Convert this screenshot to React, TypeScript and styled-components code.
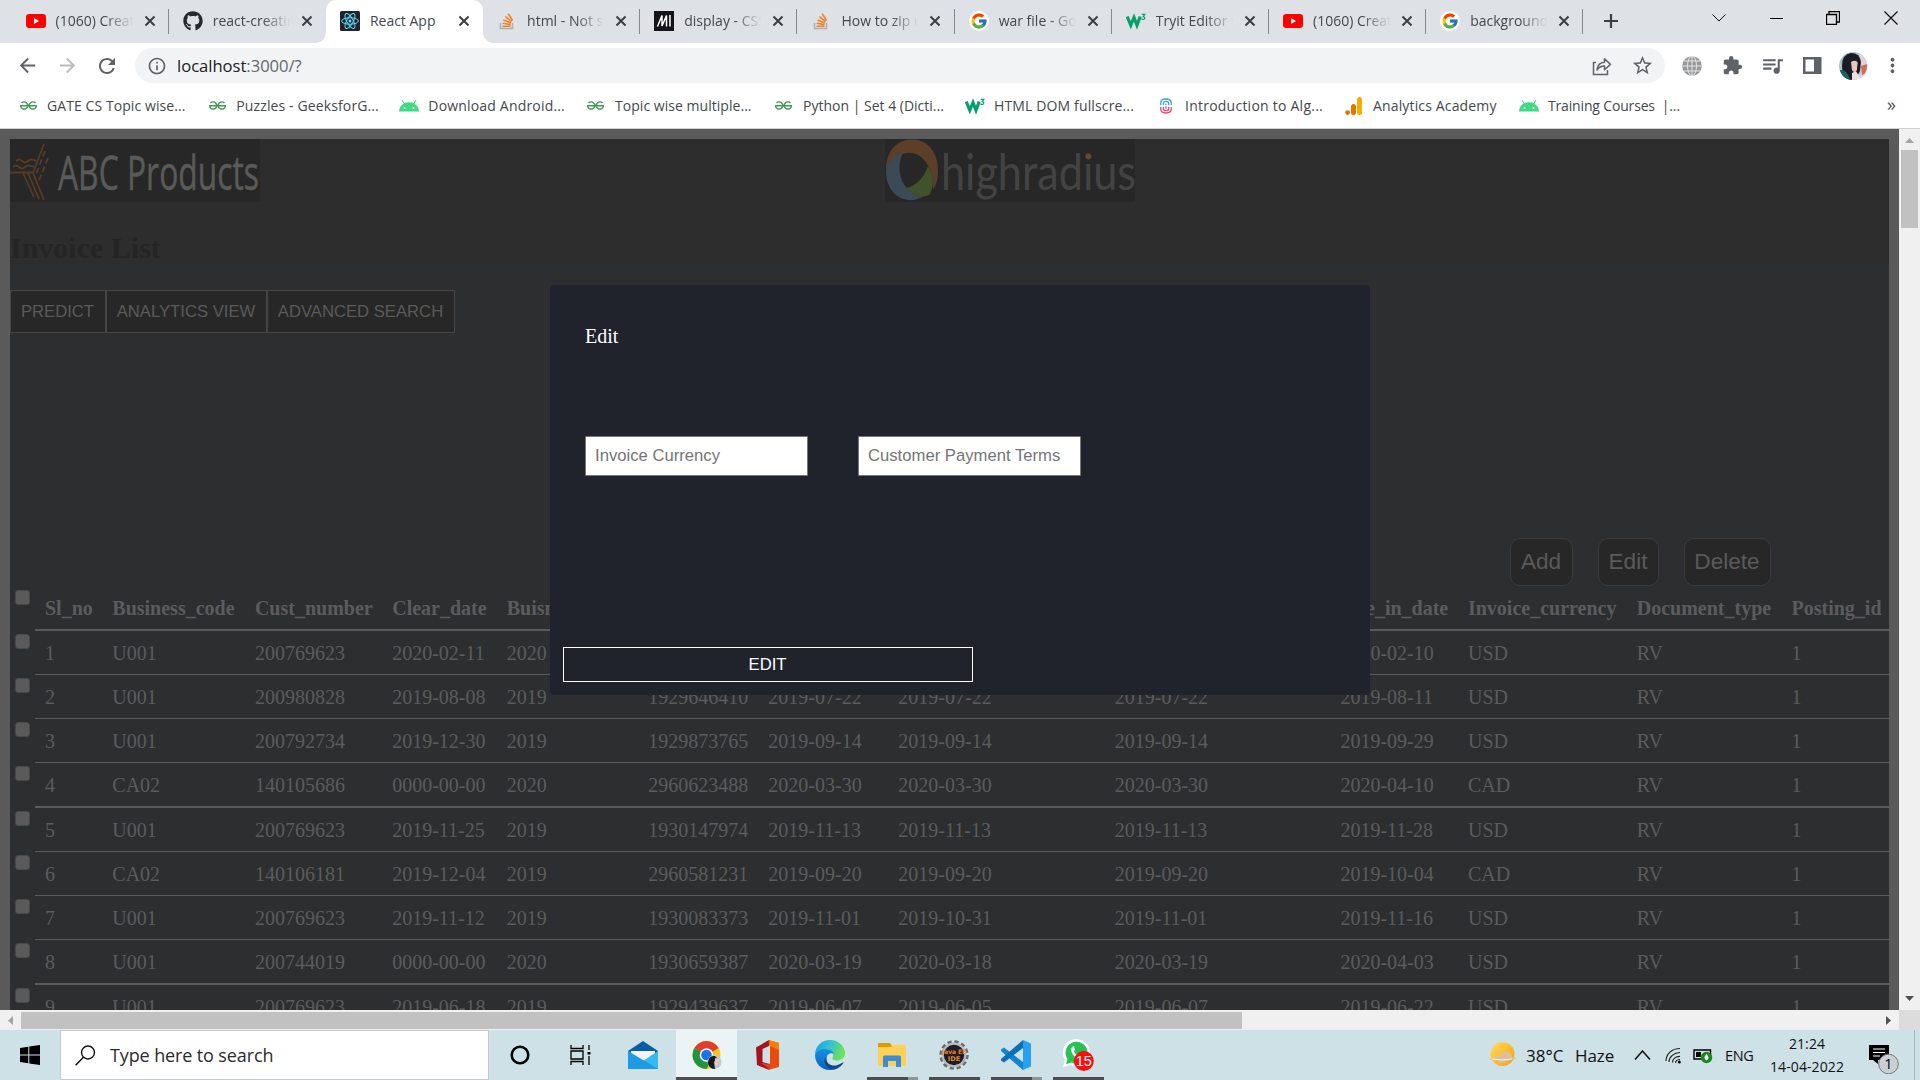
import React from "react";
import styled, { createGlobalStyle } from "styled-components";
import { FaGithub } from "react-icons/fa";
import { FcGoogle } from "react-icons/fc";
import { SiGeeksforgeeks } from "react-icons/si";
import {
  MdArrowBack, MdArrowForward, MdRefresh, MdInfoOutline, MdStarBorder,
  MdExtension, MdQueueMusic, MdMoreVert,
} from "react-icons/md";

const Global = createGlobalStyle`
  * { box-sizing: border-box; }
  body { margin: 0; overflow: hidden; }
`;

const ui = `"Open Sans", "Noto Sans", sans-serif`;
const sans = `"Liberation Sans", Arial, sans-serif`;
const serif = `"Liberation Serif", "Times New Roman", serif`;

const Screen = styled.div`
  display: flex;
  flex-direction: column;
  width: 1920px;
  height: 1080px;
  overflow: hidden;
  background: #fff;
  font-family: ${ui};
`;

/* ---------- tab strip ---------- */
const TabStrip = styled.div`
  display: flex;
  height: 43px;
  padding-left: 11.5px;
  background: #dee1e6;
`;
const Tab = styled.div<{ $active?: boolean; $bar?: boolean }>`
  position: relative;
  display: flex;
  align-items: center;
  width: 157.2px;
  height: 43px;
  padding: 0 0 1px 14px;
  flex: none;
  border-radius: 10px 10px 0 0;
  background: ${(p) => (p.$active ? "#fff" : "transparent")};
  &::after {
    content: "";
    display: ${(p) => (p.$bar ? "block" : "none")};
    position: absolute;
    right: 0;
    top: 9px;
    width: 1px;
    height: 25px;
    background: #85888c;
  }
`;
const TabFoot = styled.i<{ $left?: boolean }>`
  position: absolute;
  bottom: 0;
  ${(p) => (p.$left ? "left: -10px;" : "right: -10px;")}
  width: 10px;
  height: 10px;
  background: radial-gradient(circle at ${(p) => (p.$left ? "0 0" : "100% 0")}, transparent 9.5px, #fff 10px);
`;
const TabIcon = styled.span`
  display: flex;
  justify-content: center;
  width: 20px;
  margin-right: 10px;
  flex: none;
`;
const TabTitle = styled.span<{ $fade?: boolean }>`
  width: 79px;
  overflow: hidden;
  white-space: nowrap;
  font-size: 14px;
  line-height: 20px;
  color: #45484c;
  ${(p) => (p.$fade ? "-webkit-mask-image: linear-gradient(90deg, #000 62%, transparent 98%);" : "")}
`;
const TabClose = styled.svg`
  margin-left: 9px;
  width: 12px;
  height: 12px;
  flex: none;
`;
const NewTab = styled.svg`
  width: 16px;
  height: 16px;
  margin: 13px 0 0 20px;
`;
const WindowKeys = styled.div`
  display: flex;
  margin-left: auto;
  padding-right: 0.5px;
  height: 36px;
`;
const WindowKey = styled.span`
  display: flex;
  align-items: center;
  justify-content: center;
  width: 57.4px;
`;

/* ---------- toolbar ---------- */
const Toolbar = styled.div`
  display: flex;
  align-items: center;
  height: 45px;
  padding: 0 8px 0 7px;
  color: #5f6368;
`;
const Tool = styled.span<{ $dim?: boolean; $w?: number }>`
  display: flex;
  align-items: center;
  justify-content: center;
  width: ${(p) => p.$w ?? 40}px;
  height: 35px;
  flex: none;
  color: ${(p) => (p.$dim ? "#babcbe" : "#5f6368")};
`;
const Omnibox = styled.div`
  display: flex;
  align-items: center;
  width: 1530px;
  height: 35px;
  flex: none;
  margin: 0 7px 0 8px;
  padding: 0 3px 0 12px;
  border-radius: 18px;
  background: #f1f3f4;
`;
const Url = styled.span`
  flex: 1;
  margin-left: 10px;
  font-size: 16.6px;
  line-height: 24px;
  letter-spacing: -0.02px;
  color: #64686c;
  b { font-weight: 400; color: #202124; }
`;
const Avatar = styled.svg`
  width: 28px;
  height: 28px;
`;

/* ---------- bookmarks ---------- */
const Bookmarks = styled.div`
  display: flex;
  height: 41px;
  padding: 0 20px 5px 18px;
  border-bottom: 1px solid #cfd0d2;
  align-items: center;
`;
const Bookmark = styled.div<{ $w: number }>`
  display: flex;
  align-items: center;
  width: ${(p) => p.$w}px;
  flex: none;
`;
const MarkIcon = styled.span`
  display: flex;
  justify-content: center;
  width: 20px;
  margin-right: 9px;
  flex: none;
`;
const MarkText = styled.span<{ $track?: number }>`
  white-space: pre;
  font-size: 14px;
  line-height: 20px;
  letter-spacing: ${(p) => p.$track ?? 0}px;
  color: #45484c;
`;
const More = styled.span`
  margin: -4px 4px 0 auto;
  font-size: 18px;
  line-height: 20px;
  color: #505357;
`;

/* ---------- web page ---------- */
const Viewport = styled.div`
  display: grid;
  grid-template-columns: 1899px 21px;
  grid-template-rows: 881px 20px;
  height: 901px;
`;
const Page = styled.div`
  position: relative;
  overflow: hidden;
  padding: 10px 10px 0;
  background: #5a5a5a;
  font-family: ${serif};
  font-size: 20px;
`;
const Head = styled.header`
  height: 126px;
  background: #2d2d2d;
`;
const Logos = styled.div`
  display: flex;
  gap: 625px;
  height: 63px;
`;
const LogoBox = styled.svg`
  width: 250px;
  height: 63px;
  background: #272727;
`;
const Title = styled.h2`
  margin: 29px 0 0;
  font-size: 30px;
  line-height: 34px;
  color: #252525;
`;
const Body = styled.main`
  height: 760px;
  padding-top: 25px;
  background: #2d2e30;
`;
const ButtonRow = styled.div`
  display: flex;
`;
const Button = styled.button<{ $w: number }>`
  width: ${(p) => p.$w}px;
  height: 43px;
  padding: 1px 1px 0 0;
  border: 1px solid #464646;
  background: #272727;
  color: #5a5a5a;
  font: 16.67px ${sans};
  white-space: nowrap;
`;
const Actions = styled.div`
  display: flex;
  justify-content: flex-end;
  gap: 25px;
  margin-top: 205px;
  padding-right: 118px;
`;
const Action = styled(Button)`
  height: 48px;
  padding: 0 1px 1px 0;
  border-color: #3b3b3b;
  border-radius: 10px;
  font-size: 22.6px;
`;
const Table = styled.div`
  margin-top: 1px;
  color: #5b5c5d;
`;
const Line = styled.div<{ $h: number }>`
  display: flex;
  height: ${(p) => p.$h}px;
`;
const Check = styled.span`
  width: 15px;
  height: 15px;
  margin: 3px 5px 0;
  flex: none;
  border: 1px solid #484848;
  border-radius: 3px;
  background: #5a5a5a;
`;
const Cells = styled.div<{ $rule: number; $head?: boolean }>`
  display: grid;
  grid-template-columns: 67.3px 142.6px 137.3px 114.6px 141.4px 120.2px 130px 216.4px 225.7px 127.5px 168.8px 154.8px 1fr;
  flex: 1;
  padding-left: 10px;
  border-bottom: ${(p) => p.$rule}px solid ${(p) => (p.$rule > 1 ? "#5a5a5b" : "#595a5b")};
  font-weight: ${(p) => (p.$head ? 700 : 400)};
  line-height: 23px;
  padding-top: ${(p) => (p.$head ? 10 : 11)}px;
`;
const Cell = styled.span`
  white-space: nowrap;
`;

const Modal = styled.section`
  position: absolute;
  left: 550px;
  top: 156px;
  width: 820px;
  height: 410px;
  padding: 39px 13px 13px;
  display: flex;
  flex-direction: column;
  border-radius: 4px;
  background: #20232b;
  color: #fff;
`;
const ModalTitle = styled.div`
  margin-left: 22px;
  line-height: 24px;
`;
const Fields = styled.div`
  display: flex;
  gap: 50px;
  margin: 88px 0 0 22px;
`;
const Field = styled.input`
  width: 223px;
  height: 40px;
  padding: 0 9px;
  border: 1px solid #767676;
  border-radius: 1px;
  background: #fff;
  font: 16.67px ${sans};
  &::placeholder { color: #757575; opacity: 1; }
`;
const Submit = styled.button`
  width: 410px;
  height: 35px;
  margin-top: auto;
  padding: 1px 1px 0 0;
  border: 1px solid #fff;
  background: transparent;
  color: #fff;
  font: 16.67px ${sans};
`;

const VBar = styled.div`
  display: flex;
  flex-direction: column;
  align-items: center;
  justify-content: space-between;
  background: #f0f0f0;
`;
const VThumb = styled.div`
  width: 17px;
  height: 78px;
  margin: 0 0 auto;
  background: #c1c1c1;
`;
const HBar = styled.div`
  display: flex;
  align-items: center;
  background: #f0f0f0;
`;
const HThumb = styled.div`
  width: 1221px;
  height: 17px;
  margin: 1px auto 0 0;
  background: #c1c1c1;
`;
const Arrow = styled.svg`
  width: 21px;
  height: 21px;
  flex: none;
`;
const Corner = styled.div`
  background: #dcdcdc;
`;

/* ---------- taskbar ---------- */
const Taskbar = styled.footer`
  display: flex;
  height: 50px;
  background: #cde1e7;
  color: #111;
`;
const Start = styled.div`
  display: flex;
  align-items: center;
  width: 60px;
  padding-left: 20px;
`;
const Search = styled.div`
  display: flex;
  align-items: center;
  width: 429px;
  padding: 0 0 0 14px;
  border: 1px solid #c3cacd;
  background: #fff;
  font-size: 18px;
  color: #2b2b2b;
`;
const SearchText = styled.span`
  margin-left: 14px;
  letter-spacing: -0.12px;
`;
const AppButton = styled.div<{ $w?: number; $on?: boolean }>`
  position: relative;
  display: flex;
  align-items: center;
  justify-content: center;
  width: ${(p) => p.$w ?? 62}px;
  background: ${(p) => (p.$on ? "#eaf3f6" : "transparent")};
`;
const Underline = styled.i<{ $w: number; $multi?: boolean }>`
  position: absolute;
  bottom: 0;
  left: calc(50% - ${(p) => p.$w / 2}px);
  width: ${(p) => p.$w}px;
  height: 3px;
  background: ${(p) => (p.$multi ? "linear-gradient(90deg, #4b4d4e 41px, #8f9496 41px)" : "#4b4d4e")};
`;
const Tray = styled.div`
  display: flex;
  align-items: center;
  margin-left: auto;
  width: 432px;
  flex: none;
`;
const TrayText = styled.span<{ $w: number; $size: number; $track?: number }>`
  width: ${(p) => p.$w}px;
  font-size: ${(p) => p.$size}px;
  letter-spacing: ${(p) => p.$track ?? 0}px;
  white-space: nowrap;
`;
const TraySlot = styled.span<{ $w: number }>`
  display: flex;
  align-items: center;
  width: ${(p) => p.$w}px;
`;
const Clock = styled.div`
  width: 84px;
  margin-right: 20px;
  text-align: center;
  font-size: 14px;
  line-height: 23px;
  padding-bottom: 1px;
  letter-spacing: 0.1px;
`;
const Peek = styled.i`
  width: 1px;
  height: 50px;
  margin-left: auto;
  margin-right: 5px;
  background: #a3b6bc;
`;

/* ---------- drawings ---------- */
const YouTube = () => (
  <svg width="20" height="20" viewBox="0 0 20 20">
    <rect y="3" width="20" height="14" rx="3.2" fill="#f00" />
    <path d="M8 7v6l5-3z" fill="#fff" />
  </svg>
);
const ReactLogo = () => (
  <svg width="20" height="20" viewBox="0 0 20 20">
    <rect width="20" height="20" rx="1.5" fill="#20232a" />
    <g fill="none" stroke="#61dafb" strokeWidth="1">
      <ellipse cx="10" cy="10" rx="8.4" ry="3.2" />
      <ellipse cx="10" cy="10" rx="8.4" ry="3.2" transform="rotate(60 10 10)" />
      <ellipse cx="10" cy="10" rx="8.4" ry="3.2" transform="rotate(120 10 10)" />
    </g>
    <circle cx="10" cy="10" r="1.5" fill="#61dafb" />
  </svg>
);
const Stack = () => (
  <svg width="20" height="20" viewBox="0 0 20 20">
    <path d="M3.5 12v5.5h12V12" fill="none" stroke="#aab0b5" strokeWidth="1.5" />
    <g stroke="#f48024" strokeWidth="1.6">
      <path d="M5.5 15.2h8M5.6 12.3l7.9 1.3M6.4 9l7.5 3M8.4 5.6l6.3 5M11.2 2.8l4.4 6.7" />
    </g>
  </svg>
);
const Mdn = () => (
  <svg width="20" height="20" viewBox="0 0 20 20">
    <rect width="20" height="20" fill="#15141a" />
    <path d="M3.500 15.500L8 4.500V15L12.500 4.500V15.500M16 4v11.500" fill="none" stroke="#fff" strokeWidth="1.500" />
  </svg>
);
const GoogleDisc = styled.span`
  display: flex;
  align-items: center;
  justify-content: center;
  width: 20px;
  height: 20px;
  border-radius: 50%;
  background: #fff;
`;
const Google = () => <GoogleDisc><FcGoogle size={18} /></GoogleDisc>;
const W3 = () => (
  <svg width="20" height="20" viewBox="0 0 20 20">
    <path d="M1.2 5.5L4.8 14.3L8 6.5L11 14.3L14.2 5.5" fill="none" stroke="#04a16d" strokeWidth="3.2" />
    <path d="M15.8 3.4h3L17.2 5.6c2.2 0 2 2.9 0 2.9-.8 0-1.3-.4-1.6-.9" fill="none" stroke="#04a16d" strokeWidth="1.2" />
  </svg>
);
const Gfg = () => <SiGeeksforgeeks size={17} color="#459a5b" />;
const Android = () => (
  <svg width="20" height="20" viewBox="0 0 20 20">
    <path d="M0 15.5C.4 9.6 4.6 6.2 10 6.2s9.600 3.400 10 9.300z" fill="#3ddc84" />
    <path d="M3 4l2.500 4.200M17 4l-2.500 4.200" stroke="#3ddc84" strokeWidth="1" />
    <circle cx="5.500" cy="12" r=".9" fill="#fff" /><circle cx="14.500" cy="12" r=".9" fill="#fff" />
  </svg>
);
const Algo = () => (
  <svg width="14" height="18" viewBox="0 0 16 20" fill="none" strokeWidth="1.500">
    <path d="M2 9V6.500Q2 2 8 2t6 4.500V9M5 9V7Q5 4.800 8 4.800T11 7v2M8 7v2.500" stroke="#3d9fd3" />
    <path d="M2 11v2.500Q2 18 8 18t6-4.500V11M5 11v2Q5 15.200 8 15.200T11 13v-2M8 10v3" stroke="#e8467c" />
    <path d="M0 10h16" stroke="#fff" strokeWidth=".8" />
  </svg>
);
const Analytics = () => (
  <svg width="18" height="20" viewBox="0 0 18 20">
    <rect x="12" y="1" width="5" height="18" rx="2.500" fill="#f9ab00" />
    <rect x="6" y="8" width="5" height="11" rx="2.500" fill="#e37400" />
    <circle cx="2.600" cy="16.600" r="2.400" fill="#e37400" />
  </svg>
);
const Share = () => (
  <svg width="20" height="20" viewBox="0 0 20 20" fill="none" stroke="#5f6368" strokeWidth="1.500">
    <path d="M4 6.500H1.500v12h14V14" />
    <path d="M5 14C5.500 9 8.500 6.500 12.500 6.300V2.800l6 5.600-6 5.300V10C9.500 10 7 11 5 14z" strokeLinejoin="round" />
  </svg>
);
const Globe = () => (
  <svg width="20" height="20" viewBox="0 0 20 20">
    <circle cx="10" cy="10" r="9.800" fill="#96989a" />
    <g fill="none" stroke="#e3e4e5" strokeWidth="1">
      <ellipse cx="10" cy="10" rx="4.500" ry="9.800" />
      <path d="M10 0v20M0 10h20M1.500 5h17M1.500 15h17" />
    </g>
  </svg>
);
const SidePanel = () => (
  <svg width="19" height="19" viewBox="0 0 19 19">
    <path d="M0 1h18.500v17H0z M2.500 3.500v12H11v-12z" fill="#5f6368" fillRule="evenodd" />
  </svg>
);
const Portrait = () => (
  <Avatar viewBox="0 0 28 28">
    <clipPath id="face"><circle cx="14" cy="14" r="14" /></clipPath>
    <g clipPath="url(#face)">
      <rect width="28" height="28" fill="#a9c6cb" />
      <path d="M20 0h8v28h-8z" fill="#e3cfd8" />
      <path d="M22 14l6-2v9l-5 2z" fill="#cc6d58" />
      <path d="M3 14Q3 2 12 1q9 0 10 9l-1 9-6 9H4z" fill="#1b1d24" />
      <path d="M1 18q7-1 10 10H1z" fill="#1f6063" />
      <path d="M12 10q5-3 7 1l-1 7q-3 4-5 0z" fill="#e6c8bd" />
      <path d="M13 21l4-2 5 9h-9z" fill="#e8e4e2" />
      <path d="M19 8q3 5 1 14l-2-3z" fill="#1b1d24" />
    </g>
  </Avatar>
);

const AbcLogo = () => (
  <LogoBox viewBox="0 0 250 63">
    <g fill="none" stroke="#563b26" strokeWidth="1.800">
      <path d="M0 33.500h23L34 5M13 34l11 24M18 34l11 26M23 34l11 27" />
      <path d="M6 22q3-3 6 0t6 0 8 0M3 28q3-3 6 0t6 0 9 0" />
      <path d="M35 12L25 38M38 19L28 44" strokeDasharray="6 3" />
    </g>
    <text x="48" y="51" fontFamily="Open Sans" fontSize="47" fill="#5a5a5a" stroke="#5a5a5a" strokeWidth=".5" textLength="201" lengthAdjust="spacingAndGlyphs">ABC Products</text>
  </LogoBox>
);
const HighRadius = () => (
  <LogoBox viewBox="0 0 250 63">
    <path d="M1 31C1 13 11 .5 27 .5s26 13 26 31c0 9-2 15-5 19 0-9-1-17-5-24C37 15 25 10 14 17 6 21 3 25 1 31z" fill="#5c3f29" />
    <path d="M18 14C12 24 14 40 21 48q8 9 18 9C22 68 1 56 1 33 1 25 8 17 18 14z" fill="#3b4a57" />
    <path d="M43 27c6 10 6 20 2 28-4 4-14 4-24-6 9-1 18-10 22-22z" fill="#41522b" />
    <text x="56" y="51" fontFamily="Lato" fontSize="50" fill="#434343" textLength="195" lengthAdjust="spacingAndGlyphs">highradius</text>
    <circle cx="203.500" cy="17.500" r="2.800" fill="#6b452c" />
  </LogoBox>
);

const Mail = () => (
  <svg width="30" height="30" viewBox="0 0 30 30">
    <path d="M0 11L15 1l15 10v7H0z" fill="#0a5ba8" />
    <path d="M3 11h24v9H3z" fill="#f4f4f6" />
    <path d="M0 11l15 10 15-10v18H0z" fill="#35b9f1" />
    <path d="M0 11l30 18H0z" fill="#1e9be3" />
  </svg>
);
const Chrome = () => (
  <svg width="30" height="30" viewBox="0 0 30 30">
    <circle cx="14.500" cy="15" r="14" fill="#fcc31e" />
    <path d="M14.500 15L2.400 8A14 14 0 0 1 26.600 8z" fill="#e33b2e" />
    <path d="M14.500 15L2.400 8a14 14 0 0 0 12.100 21l5-9z" fill="#229342" />
    <circle cx="14.500" cy="15" r="6.800" fill="#fff" />
    <circle cx="14.500" cy="15" r="5.300" fill="#1a73e8" />
    <circle cx="22.500" cy="22" r="7" fill="#bfc9cc" />
    <path d="M16 24q0-9 7-8l2 2-3 4 1 7q-5 0-7-5z" fill="#17191e" />
    <path d="M23 18l4 1-1 6-3 1z" fill="#e3c8be" />
  </svg>
);
const Office = () => (
  <svg width="24" height="30" viewBox="0 0 24 30">
    <path d="M0 7.500L13 0v6L6.500 9v13L13 24v6L1 25z" fill="#a5131c" />
    <path d="M12 0l11 3v24l-11 3V24.500l2-1V6.500z" fill="#eb4a0b" />
    <path d="M13 0l10 3v7l-9-4z" fill="#f98005" />
    <path d="M5 23l9 1v6z" fill="#d33c2a" />
  </svg>
);
const Edge = () => (
  <svg width="30" height="30" viewBox="0 0 30 30">
    <defs>
      <linearGradient id="sea" x1="0" x2="1" y1="0" y2=".3"><stop offset="0" stopColor="#1b9ce6" /><stop offset=".55" stopColor="#33c5ce" /><stop offset="1" stopColor="#6be356" /></linearGradient>
      <linearGradient id="deep" x1="0" x2="0" y1="0" y2="1"><stop offset="0" stopColor="#1590df" /><stop offset="1" stopColor="#0a62c4" /></linearGradient>
    </defs>
    <path d="M0 15C0 6 7 0 15 0s15 6 15 13c0 5-4 7.500-8 7.500-3 0-5-1-4.500-2.500 2-3 .5-8-5.500-8.500C6 9 1 12 0 15z" fill="url(#sea)" />
    <path d="M0 15C1 11 6 8.500 11 9c4 .4 7 2 8 5-4-2-8 1-7.500 5.500.5 6 6 9.500 11 8.500-3 2-6 2-8 2C6 30 0 23 0 15z" fill="url(#deep)" />
    <path d="M11.500 17c-1.500 6 5 10 11 8 3-1 5-3 6-2.500.5 0-2 4.500-7.500 6.500C12 30.500 6 22 11.500 17z" fill="#114a8b" />
  </svg>
);
const Folder = () => (
  <svg width="28" height="26" viewBox="0 0 28 26">
    <path d="M0 2q0-1 1-1h11l2 3v6H0z" fill="#dc9a05" />
    <path d="M0 5h13l2-2h12q1 0 1 1v20H0z" fill="#fdd057" />
    <path d="M5 25V15q0-1.500 1.500-1.500h15Q23 13.500 23 15v10h-5v-6h-8v6z" fill="#3b8dd6" />
  </svg>
);
const JavaIde = () => (
  <svg width="30" height="30" viewBox="0 0 30 30">
    <circle cx="15" cy="15" r="12.700" fill="none" stroke="#6a6d70" strokeWidth="4" strokeDasharray="4 2.650" />
    <circle cx="15" cy="15" r="11.300" fill="#1d1d2b" stroke="#b9bbbd" strokeWidth="2.200" />
    <text x="15" y="14" textAnchor="middle" fontFamily="DejaVu Sans" fontSize="6.200" fontWeight="700" fill="#f08317" textLength="24" lengthAdjust="spacingAndGlyphs">Java EE</text>
    <text x="15" y="20.500" textAnchor="middle" fontFamily="DejaVu Sans" fontSize="6.500" fontWeight="700" fill="#f08317">IDE</text>
  </svg>
);
const VsCode = () => (
  <svg width="30" height="30" viewBox="0 0 30 30">
    <path d="M0 9.500L3 7.500 22 22v8L0 11z" fill="#1185d0" />
    <path d="M0 20.500L3 22.500 22 8V0L0 19z" fill="#0a6fb8" />
    <path d="M22 0l8 3.500v23L22 30z" fill="#26a1f0" />
  </svg>
);
const WhatsApp = () => (
  <svg width="32" height="32" viewBox="0 0 32 32">
    <path d="M1 28l2-7A13.500 13.500 0 1 1 9 26z" fill="#fff" />
    <path d="M4 25l1.500-5A11 11 0 1 1 9.500 23.500z" fill="#25c455" />
    <path d="M10 8c-3 4 3 13 9 12l1-4-4-1-1 1c-2-1-3-3-3-4l1-1-1-4z" fill="#fff" />
    <circle cx="21.800" cy="22" r="10" fill="#fd0d0d" />
    <text x="21.800" y="27" textAnchor="middle" fontFamily="Liberation Sans" fontSize="14.500" fill="#fff">15</text>
  </svg>
);
const Notifications = () => (
  <svg width="32" height="38" viewBox="0 0 32 38">
    <path d="M0 9h20v15H9v4l-5-4H0z" fill="#000" />
    <path d="M4 13h12M4 16.500h12M4 20h7" stroke="#fff" strokeWidth="1.100" />
    <circle cx="19.500" cy="28" r="9.800" fill="#c9cfd2" stroke="#777" />
    <text x="19.500" y="33.200" textAnchor="middle" fontFamily="Open Sans" fontSize="14.500" fill="#000">1</text>
  </svg>
);

/* ---------- data ---------- */
const tabs = [
  { icon: <YouTube />, title: "(1060) Creati", bar: true },
  { icon: <FaGithub size={20} color="#24292f" />, title: "react-creatin" },
  { icon: <ReactLogo />, title: "React App", active: true },
  { icon: <Stack />, title: "html - Not s", bar: true },
  { icon: <Mdn />, title: "display - CSS", bar: true },
  { icon: <Stack />, title: "How to zip u", bar: true },
  { icon: <Google />, title: "war file - Go", bar: true },
  { icon: <W3 />, title: "Tryit Editor v", bar: true },
  { icon: <YouTube />, title: "(1060) Creati", bar: true },
  { icon: <Google />, title: "background-", bar: true },
];

const marks = [
  { icon: <Gfg />, text: "GATE CS Topic wise...", w: 189.3, track: 0.08 },
  { icon: <Gfg />, text: "Puzzles - GeeksforG...", w: 192, track: 0.12 },
  { icon: <Android />, text: "Download Android...", w: 186.7, track: 0.18 },
  { icon: <Gfg />, text: "Topic wise multiple...", w: 188, track: 0.04 },
  { icon: <Gfg />, text: "Python | Set 4 (Dicti...", w: 191, track: 0 },
  { icon: <W3 />, text: "HTML DOM fullscre...", w: 191, track: 0.14 },
  { icon: <Algo />, text: "Introduction to Alg...", w: 188, track: 0.24 },
  { icon: <Analytics />, text: "Analytics Academy", w: 175, track: 0.15 },
  { icon: <Android />, text: "Training Courses  |...", w: 190, track: -0.16 },
];

const headings = ["Sl_no", "Business_code", "Cust_number", "Clear_date", "Buisness_year", "Doc_id", "Posting_date", "Document_create_date", "Document_create_date1", "Due_in_date", "Invoice_currency", "Document_type", "Posting_id"];
const rows = [
  ["1", "U001", "200769623", "2020-02-11", "2020", "1930438491", "2020-01-26", "2020-01-25", "2020-01-26", "2020-02-10", "USD", "RV", "1"],
  ["2", "U001", "200980828", "2019-08-08", "2019", "1929646410", "2019-07-22", "2019-07-22", "2019-07-22", "2019-08-11", "USD", "RV", "1"],
  ["3", "U001", "200792734", "2019-12-30", "2019", "1929873765", "2019-09-14", "2019-09-14", "2019-09-14", "2019-09-29", "USD", "RV", "1"],
  ["4", "CA02", "140105686", "0000-00-00", "2020", "2960623488", "2020-03-30", "2020-03-30", "2020-03-30", "2020-04-10", "CAD", "RV", "1"],
  ["5", "U001", "200769623", "2019-11-25", "2019", "1930147974", "2019-11-13", "2019-11-13", "2019-11-13", "2019-11-28", "USD", "RV", "1"],
  ["6", "CA02", "140106181", "2019-12-04", "2019", "2960581231", "2019-09-20", "2019-09-20", "2019-09-20", "2019-10-04", "CAD", "RV", "1"],
  ["7", "U001", "200769623", "2019-11-12", "2019", "1930083373", "2019-11-01", "2019-10-31", "2019-11-01", "2019-11-16", "USD", "RV", "1"],
  ["8", "U001", "200744019", "0000-00-00", "2020", "1930659387", "2020-03-19", "2020-03-18", "2020-03-19", "2020-04-03", "USD", "RV", "1"],
  ["9", "U001", "200769623", "2019-06-18", "2019", "1929439637", "2019-06-07", "2019-06-05", "2019-06-07", "2019-06-22", "USD", "RV", "1"],
];

export default function App() {
  return (
    <Screen>
      <Global />
      <TabStrip>
        {tabs.map((t, i) => (
          <Tab key={i} $active={t.active} $bar={t.bar}>
            {t.active && <><TabFoot $left /><TabFoot /></>}
            <TabIcon>{t.icon}</TabIcon>
            <TabTitle $fade={!t.active}>{t.title}</TabTitle>
            <TabClose viewBox="0 0 12 12"><path d="M1.500 1.500l9 9M10.500 1.500l-9 9" stroke="#3c4043" strokeWidth="2" /></TabClose>
          </Tab>
        ))}
        <NewTab viewBox="0 0 16 16"><path d="M8 1v14M1 8h14" stroke="#3c4043" strokeWidth="2.200" /></NewTab>
        <WindowKeys>
          <WindowKey><svg width="14" height="8" viewBox="0 0 14 8"><path d="M.5.5L7 7 13.500.5" fill="none" stroke="#111" /></svg></WindowKey>
          <WindowKey><svg width="13" height="2" viewBox="0 0 13 2"><path d="M0 1.500h13" stroke="#000" /></svg></WindowKey>
          <WindowKey><svg width="14" height="14" viewBox="0 0 14 14"><path d="M.5 3.500h10v10H.5zM3 3V.5h10.500V11H11" fill="none" stroke="#000" strokeWidth="1.300" /></svg></WindowKey>
          <WindowKey><svg width="14" height="14" viewBox="0 0 14 14"><path d="M.5.5l13 13M13.500.5l-13 13" stroke="#111" strokeWidth="1.200" /></svg></WindowKey>
        </WindowKeys>
      </TabStrip>

      <Toolbar>
        <Tool><MdArrowBack size={23} /></Tool>
        <Tool $dim><MdArrowForward size={23} /></Tool>
        <Tool><MdRefresh size={24} /></Tool>
        <Omnibox>
          <MdInfoOutline size={20} />
          <Url><b>localhost</b>:3000/?</Url>
          <Tool><Share /></Tool>
          <Tool><MdStarBorder size={23} /></Tool>
        </Omnibox>
        <Tool><Globe /></Tool>
        <Tool><MdExtension size={21} /></Tool>
        <Tool><MdQueueMusic size={25} /></Tool>
        <Tool><SidePanel /></Tool>
        <Tool $w={42}><Portrait /></Tool>
        <Tool $w={36}><MdMoreVert size={23} /></Tool>
      </Toolbar>

      <Bookmarks>
        {marks.map((m, i) => (
          <Bookmark key={i} $w={m.w}>
            <MarkIcon>{m.icon}</MarkIcon>
            <MarkText $track={m.track}>{m.text}</MarkText>
          </Bookmark>
        ))}
        <More>»</More>
      </Bookmarks>

      <Viewport>
        <Page>
          <Head>
            <Logos><AbcLogo /><HighRadius /></Logos>
            <Title>Invoice List</Title>
          </Head>
          <Body>
            <ButtonRow>
              <Button $w={96}>PREDICT</Button>
              <Button $w={161}>ANALYTICS VIEW</Button>
              <Button $w={188}>ADVANCED SEARCH</Button>
            </ButtonRow>
            <Actions>
              <Action $w={63}>Add</Action>
              <Action $w={61}>Edit</Action>
              <Action $w={87}>Delete</Action>
            </Actions>
            <Table>
              <Line $h={44}>
                <Check />
                <Cells $rule={2} $head>{headings.map((h) => <Cell key={h}>{h}</Cell>)}</Cells>
              </Line>
              {rows.map((r, i) => (
                <Line key={i} $h={i % 4 === 3 ? 45 : 44}>
                  <Check />
                  <Cells $rule={i % 4 === 3 ? 2 : 1}>{r.map((c, j) => <Cell key={j}>{c}</Cell>)}</Cells>
                </Line>
              ))}
            </Table>
          </Body>
          <Modal>
            <ModalTitle>Edit</ModalTitle>
            <Fields>
              <Field placeholder="Invoice Currency" />
              <Field placeholder="Customer Payment Terms" />
            </Fields>
            <Submit>EDIT</Submit>
          </Modal>
        </Page>
        <VBar>
          <Arrow viewBox="0 0 21 21"><path d="M6 14l4.500-5 4.500 5z" fill="#a3a3a3" /></Arrow>
          <VThumb />
          <Arrow viewBox="0 0 21 21"><path d="M6 7l4.500 5L15 7z" fill="#505050" /></Arrow>
        </VBar>
        <HBar>
          <Arrow viewBox="0 0 21 21"><path d="M13 6l-5 4.500 5 4.500z" fill="#a3a3a3" /></Arrow>
          <HThumb />
          <Arrow viewBox="0 0 21 21"><path d="M8 6l5 4.500L8 15z" fill="#505050" /></Arrow>
        </HBar>
        <Corner />
      </Viewport>

      <Taskbar>
        <Start>
          <svg width="20" height="20" viewBox="0 0 20 20"><path d="M0 3l8.300-1.200v7.700H0zM9.300 1.600L20 0v9.500H9.300zM0 10.500h8.300v7.700L0 17zM9.300 10.500H20V20L9.300 18.400z" fill="#000" /></svg>
        </Start>
        <Search>
          <svg width="21" height="21" viewBox="0 0 21 21"><circle cx="13" cy="7.500" r="6.500" fill="none" stroke="#111" strokeWidth="1.400" /><path d="M8.400 12.300L.6 20.300" stroke="#111" strokeWidth="1.500" /></svg>
          <SearchText>Type here to search</SearchText>
        </Search>
        <AppButton><svg width="22" height="22" viewBox="0 0 22 22"><circle cx="11" cy="11" r="8.300" fill="none" stroke="#000" strokeWidth="2.600" /></svg></AppButton>
        <AppButton $w={59}>
          <svg width="21" height="20" viewBox="0 0 21 20" fill="none" stroke="#000" strokeWidth="1.300"><path d="M1 0v3.500h12V0M1 20v-3.500h12V20M1 6h12v8H1zM19 0v5M19 11v9" /><path d="M17.500 7h3v2.500h-3z" fill="#000" stroke="none" /></svg>
        </AppButton>
        <AppButton $w={66}><Mail /></AppButton>
        <AppButton $w={61} $on><Chrome /><Underline $w={61} /></AppButton>
        <AppButton><Office /></AppButton>
        <AppButton><Edge /></AppButton>
        <AppButton><Folder /><Underline $w={51} $multi /></AppButton>
        <AppButton><JavaIde /><Underline $w={51} /></AppButton>
        <AppButton><VsCode /><Underline $w={51} $multi /></AppButton>
        <AppButton><WhatsApp /><Underline $w={51} /></AppButton>
        <Tray>
          <TraySlot $w={38}>
            <svg width="29" height="26" viewBox="0 0 29 26">
              <defs><linearGradient id="sun" x1="0" x2="1" y1="0" y2="1"><stop offset="0" stopColor="#ffdf5e" /><stop offset="1" stopColor="#fb9b0c" /></linearGradient></defs>
              <circle cx="14.500" cy="12" r="12" fill="url(#sun)" />
              <path d="M0 18q5-2 8-2 1-4 5-3 2-4 7-3 4 1 4 5l5 1q-3 2-7 2-3 3-9 3-3 0-4-3z" fill="#d8c0a5" opacity=".95" />
              <path d="M4 17q9 2 20 0" stroke="#fff3e0" fill="none" />
            </svg>
          </TraySlot>
          <TrayText $w={49} $size={17} $track={0}>38°C</TrayText>
          <TrayText $w={59} $size={17} $track={-0.1}>Haze</TrayText>
          <TraySlot $w={31}><svg width="17" height="11" viewBox="0 0 17 11"><path d="M1 9.500L8.500 1 16 9.500" fill="none" stroke="#111" strokeWidth="1.500" /></svg></TraySlot>
          <TraySlot $w={28}>
            <svg width="17" height="17" viewBox="0 0 17 17" fill="none" stroke="#222" strokeWidth="1.200"><path d="M1 14C1 7 7 1.500 15 1.500M4 15C4 10 9 5.500 15 5.500M7.500 15.500c0-3.500 3-6 7.500-6.200M10.500 16c0-2 2-3.500 4.500-3.500" /><circle cx="14.300" cy="15" r="1.500" fill="#000" stroke="none" /></svg>
          </TraySlot>
          <TraySlot $w={32}>
            <svg width="20" height="18" viewBox="0 0 20 18"><path d="M1 4h16.500v9H1z" fill="none" stroke="#000" strokeWidth="1.400" /><path d="M3 6h5v5H3z" fill="#000" /><circle cx="13.500" cy="11.500" r="5.700" fill="#168a1e" /><path d="M13.500 8q4 4 0 6.500-4-2.500 0-6.500z" fill="#fff" /></svg>
          </TraySlot>
          <TrayText $w={40} $size={14.5} $track={-0.3}>ENG</TrayText>
          <Clock>21:24<br />14-04-2022</Clock>
          <Notifications />
          <Peek />
        </Tray>
      </Taskbar>
    </Screen>
  );
}
